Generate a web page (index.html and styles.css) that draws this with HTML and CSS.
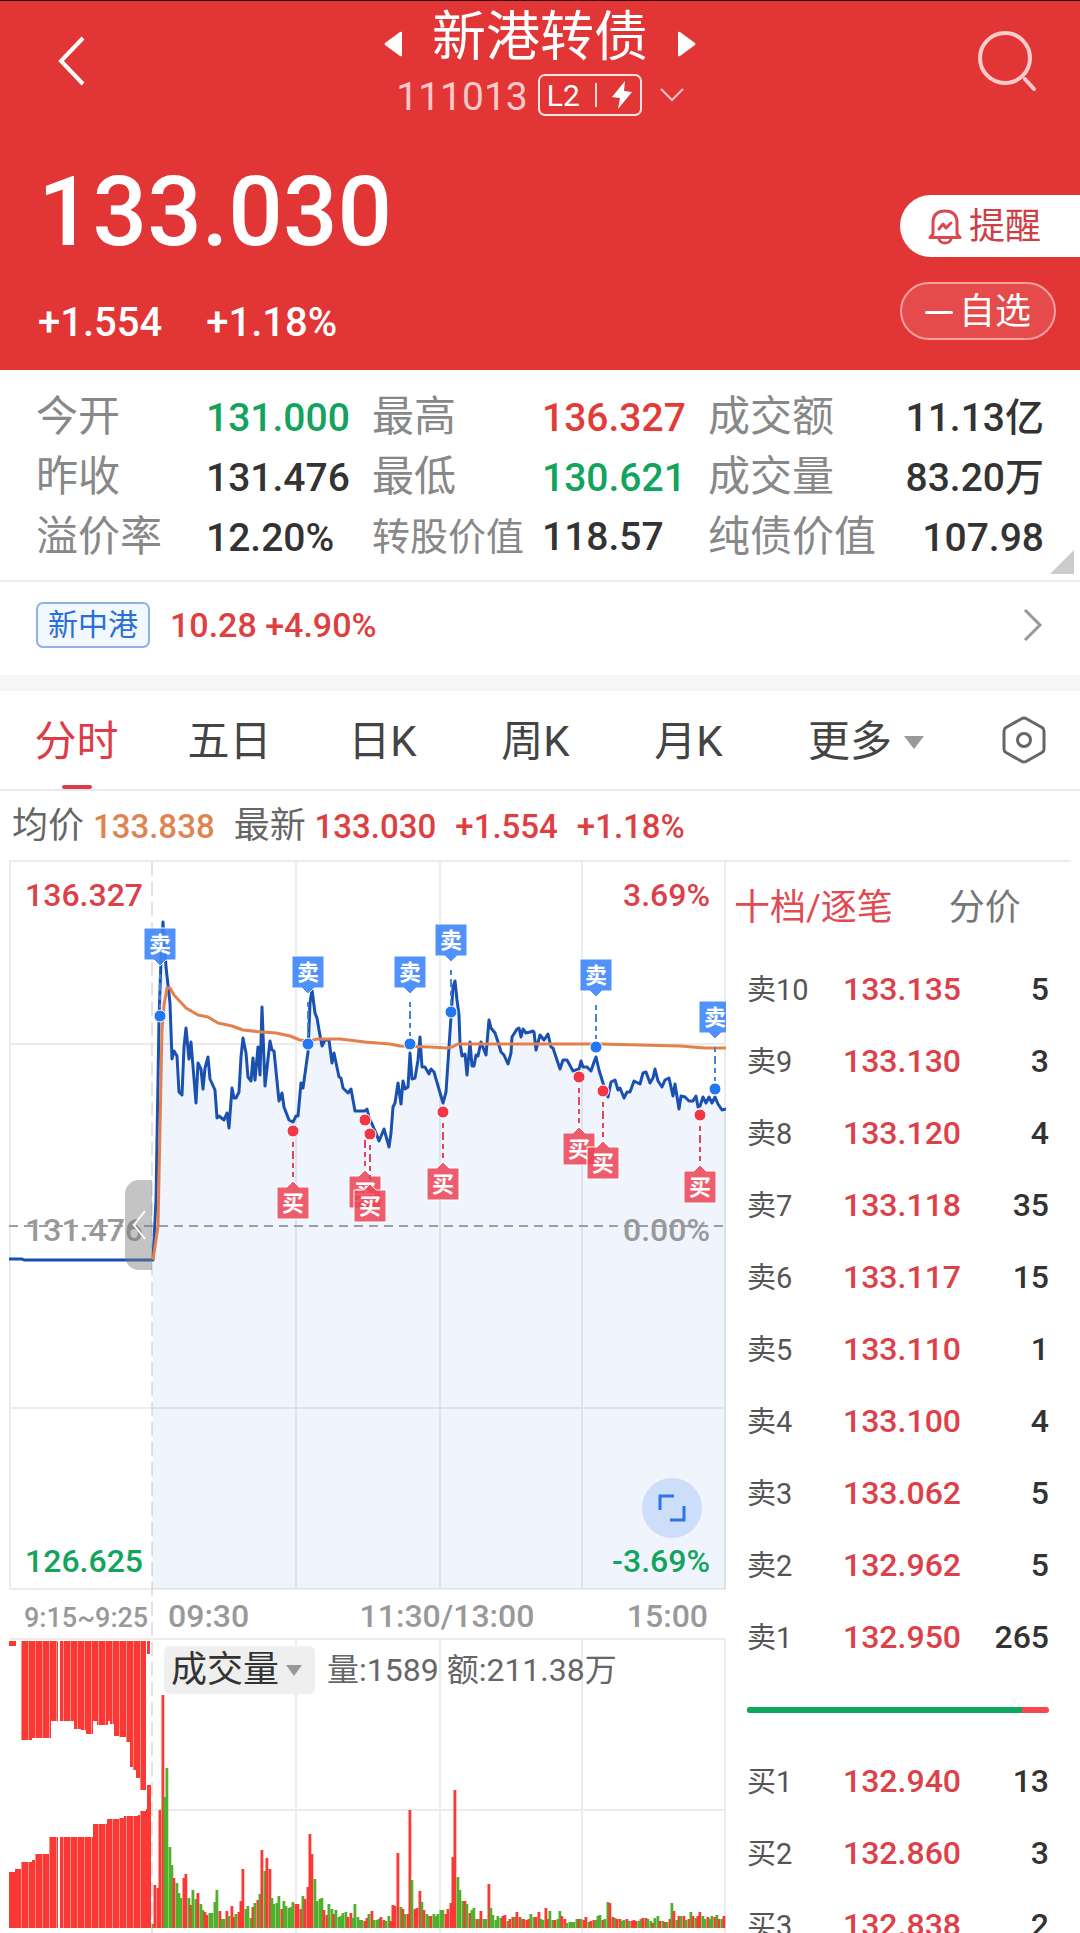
FILE: index.html
```html
<!DOCTYPE html>
<html lang="zh-CN">
<head>
  <meta charset="UTF-8">
  <meta name="viewport" content="width=device-width, initial-scale=1">
  <title>新港转债 111013</title>
  <link rel="stylesheet" href="styles.css">
</head>

<body>
  <header class="hero">
    <div class="topbar">
      <button class="icon-btn back" aria-label="返回">
        <svg width="32" height="52" viewBox="0 0 32 52"><path d="M27 3 L5 26 L27 49" fill="none" stroke="#fff" stroke-width="4"/></svg>
      </button>

      <div class="title">
        <div class="title-row">
          <button class="icon-btn arrow" aria-label="上一个">
            <svg width="18" height="26" viewBox="0 0 18 26"><path d="M18 2 Q18 0 16 1 L1 12 Q0 13 1 14 L16 25 Q18 26 18 24 Z" fill="#fff"/></svg>
          </button>
          <h1>新港转债</h1>
          <button class="icon-btn arrow" aria-label="下一个">
            <svg width="18" height="26" viewBox="0 0 18 26"><path d="M0 2 Q0 0 2 1 L17 12 Q18 13 17 14 L2 25 Q0 26 0 24 Z" fill="#fff"/></svg>
          </button>
        </div>
        <div class="code-row">
          <span class="code">111013</span>
          <span class="level">
            L2
            <i class="level-sep"></i>
            <svg width="20" height="28" viewBox="0 0 20 28"><path d="M13 0 L0 16 L8 17 L6 28 L20 11 L12 10 Z" fill="#fff"/></svg>
          </span>
          <svg class="down" width="24" height="14" viewBox="0 0 24 14"><path d="M1 1 L12 12 L23 1" fill="none" stroke="#ffc4c4" stroke-width="2"/></svg>
        </div>
      </div>

      <button class="icon-btn search" aria-label="搜索">
        <svg width="62" height="64" viewBox="0 0 62 64" fill="none" stroke="#ffcaca" stroke-linecap="round">
          <circle cx="29" cy="29" r="25" stroke-width="4"/>
          <path d="M49 50 L58 60" stroke-width="4"/>
        </svg>
      </button>
    </div>

    <div class="price-block">
      <div>
        <div class="price">133.030</div>
        <div class="change"><span>+1.554</span><span>+1.18%</span></div>
      </div>
      <div class="actions">
        <button class="remind">
          <svg width="34" height="36" viewBox="0 0 34 36" fill="none" stroke="#d94a50" stroke-width="3" stroke-linecap="round" stroke-linejoin="round">
            <path d="M5 25 V14 Q5 2 17 2 Q29 2 29 14 V25 L32 28.500 H2 Z"/>
            <path d="M11 30 Q12 34 17 34 Q22 34 23 30"/>
            <path d="M11 20 L15 15 L18 19 L23 14"/>
          </svg>
          提醒
        </button>
        <button class="watch"><i class="minus"></i>自选</button>
      </div>
    </div>
  </header>

  <section class="stats">
    <dl>
      <div><dt>今开</dt><dd class="green">131.000</dd></div>
      <div><dt>最高</dt><dd class="red">136.327</dd></div>
      <div><dt>成交额</dt><dd>11.13亿</dd></div>
      <div><dt>昨收</dt><dd>131.476</dd></div>
      <div><dt>最低</dt><dd class="green">130.621</dd></div>
      <div><dt>成交量</dt><dd>83.20万</dd></div>
      <div><dt>溢价率</dt><dd>12.20%</dd></div>
      <div><dt class="long">转股价值</dt><dd>118.57</dd></div>
      <div><dt>纯债价值</dt><dd>107.98</dd></div>
    </dl>
    <i class="corner"></i>
  </section>

  <a class="stock" href="#">
    <span class="tag">新中港</span>
    <span class="stock-price">10.28 +4.90%</span>
    <svg width="20" height="34" viewBox="0 0 20 34"><path d="M2 2 L17 17 L2 32" fill="none" stroke="#999" stroke-width="3"/></svg>
  </a>

  <nav class="tabs">
    <button class="active">分时</button>
    <button>五日</button>
    <button>日K</button>
    <button>周K</button>
    <button>月K</button>
    <button>更多<i class="caret"></i></button>
    <button class="settings" aria-label="设置">
      <svg width="44" height="48" viewBox="0 0 44 48" fill="none" stroke="#666" stroke-width="3" stroke-linejoin="round">
        <path d="M20 2.500 Q22 1.500 24 2.500 L40 11.500 Q42 13 42 15 V33 Q42 35 40 36.500 L24 45.500 Q22 46.500 20 45.500 L4 36.500 Q2 35 2 33 V15 Q2 13 4 11.500 Z"/>
        <circle cx="22" cy="24" r="6.500"/>
      </svg>
    </button>
  </nav>

  <div class="summary">
    <span>均价 <b class="orange">133.838</b></span>
    <span>最新 <b>133.030</b></span>
    <b>+1.554</b>
    <b>+1.18%</b>
  </div>

  <main class="quote">
    <div class="chart">
      <svg viewBox="9 862 717 1071" class="plot">
        <defs>
          <g id="sell">
            <path d="M0 -42 V-8" stroke="#3f84d8" stroke-width="2" stroke-dasharray="5 4 8 4"/>
            <circle r="6" fill="#2277f3" stroke="#fff" stroke-width="1"/>
            <path d="M-16 -88 H16 V-56 H6 L0 -50 L-6 -56 H-16 Z" fill="#3d85fb" fill-opacity=".9" stroke="#fff" stroke-width="1"/>
            <text y="-64" class="mark">卖</text>
          </g>
          <g id="buy">
            <path d="M0 11 V46" stroke="#e0455a" stroke-width="2" stroke-dasharray="5 4 8 4"/>
            <circle r="6" fill="#f23645" stroke="#fff" stroke-width="1"/>
            <path d="M-16 88 H16 V56 H6 L0 50 L-6 56 H-16 Z" fill="#ee4455" fill-opacity=".86" stroke="#fff" stroke-width="1"/>
            <text y="80" class="mark">买</text>
          </g>
        </defs>

        <!-- price grid -->
        <path class="grid" d="M10 862 V1589 M296 862 V1589 M440 862 V1589 M582 862 V1589 M725 862 V1589 M9 1044 H726 M9 1408 H726 M9 1589 H726"/>
        <path class="grid dashed" d="M152 862 V1933"/>
        <!-- volume grid -->
        <path class="grid" d="M296 1639 V1933 M440 1639 V1933 M582 1639 V1933 M725 1639 V1933 M9 1639 H726 M152 1810 H726"/>

        <path id="area" class="area"/>
        <path class="zero" d="M9 1226 H726"/>
        <text x="25" y="1241" class="lbl gray">131.476</text>
        <text x="710" y="1241" class="lbl gray end">0.00%</text>
        <path id="line" class="line"/>
        <path class="avg" d="M153 1260 L158 1226 L162 1030 L164 1005 L167 988 L170 988 L174 995 L186 1008 L198 1015 L208 1017 L218 1023 L232 1026 L243 1030 L262 1032 L276 1033 L290 1036 L300 1040 L308 1041 L318 1039 L340 1039 L365 1042 L390 1044 L400 1046 L430 1047 L447 1048 L452 1047 L458 1044 L600 1044 L640 1045 L680 1046 L705 1048 L726 1048"/>

        <use href="#sell" x="160" y="1016"/>
        <use href="#sell" x="308" y="1044"/>
        <use href="#sell" x="410" y="1044"/>
        <use href="#sell" x="451" y="1012"/>
        <use href="#sell" x="596" y="1047"/>
        <use href="#sell" x="715" y="1089"/>
        <use href="#buy" x="293" y="1131"/>
        <use href="#buy" x="365" y="1120"/>
        <use href="#buy" x="370" y="1134"/>
        <use href="#buy" x="443" y="1112"/>
        <use href="#buy" x="579" y="1077"/>
        <use href="#buy" x="603" y="1091"/>
        <use href="#buy" x="700" y="1115"/>

        <text x="25" y="906" class="lbl red">136.327</text>
        <text x="710" y="906" class="lbl red end">3.69%</text>
        <text x="25" y="1572" class="lbl green">126.625</text>
        <text x="710" y="1572" class="lbl green end">-3.69%</text>

        <text x="24" y="1627" class="time small">9:15~9:25</text>
        <text x="168" y="1627" class="time">09:30</text>
        <text x="447" y="1627" class="time mid">11:30/13:00</text>
        <text x="708" y="1627" class="time end">15:00</text>

        <g id="auction"></g>
        <g id="volume"></g>
      </svg>

      <button class="handle" aria-label="收起">
        <svg width="14" height="30" viewBox="0 0 14 30"><path d="M13 1 L2 15 L13 29" fill="none" stroke="#fff" stroke-width="2"/></svg>
      </button>
      <button class="expand" aria-label="全屏">
        <svg width="30" height="30" viewBox="0 0 30 30" fill="none" stroke="#2f73e8" stroke-width="3"><path d="M3 17 V3 H17"/><path d="M27 13 V27 H13"/></svg>
      </button>
      <div class="vol-head">
        <button class="vol-type">成交量<i class="caret"></i></button>
        <span>量:1589 额:211.38万</span>
      </div>
    </div>

    <aside class="book">
      <div class="book-tabs">
        <button class="active">十档/逐笔</button>
        <button>分价</button>
      </div>
      <table>
        <tr><th>卖10</th><td>133.135</td><td>5</td></tr>
        <tr><th>卖9</th><td>133.130</td><td>3</td></tr>
        <tr><th>卖8</th><td>133.120</td><td>4</td></tr>
        <tr><th>卖7</th><td>133.118</td><td>35</td></tr>
        <tr><th>卖6</th><td>133.117</td><td>15</td></tr>
        <tr><th>卖5</th><td>133.110</td><td>1</td></tr>
        <tr><th>卖4</th><td>133.100</td><td>4</td></tr>
        <tr><th>卖3</th><td>133.062</td><td>5</td></tr>
        <tr><th>卖2</th><td>132.962</td><td>5</td></tr>
        <tr><th>卖1</th><td>132.950</td><td>265</td></tr>
      </table>
      <div class="ratio"><div class="ratio-bar"><i style="width: 91%"></i></div></div>
      <table>
        <tr><th>买1</th><td>132.940</td><td>13</td></tr>
        <tr><th>买2</th><td>132.860</td><td>3</td></tr>
        <tr><th>买3</th><td>132.838</td><td>2</td></tr>
      </table>
    </aside>
  </main>

  <script src="chart.js"></script>
</body>

</html>
```

FILE: styles.css
```css
* {
  box-sizing: border-box;
}

body {
  margin: 0;
  height: 100vh;
  overflow: hidden;
  background: #fff;
  color: #333;
  font-family: Roboto, "Noto Sans CJK SC", sans-serif;
}

button {
  margin: 0;
  padding: 0;
  border: 0;
  background: none;
  color: inherit;
  font: inherit;
  cursor: pointer;
}

svg {
  display: block;
}

.red { color: #e23c39; fill: #dc4048; }
.green { color: #12a35d; fill: #12a35d; }

/* header */
.hero {
  background: #e23536;
  border-top: 1px solid #300;
  color: #fff;
  padding-bottom: 22px;
}

.topbar {
  display: grid;
  grid-template-columns: 1fr auto 1fr;
  align-items: start;
  padding: 2px 42px 0;
}

.back {
  justify-self: start;
  margin: 32px 0 0 14px;
}

.search {
  justify-self: end;
  margin-top: 26px;
}

.title-row {
  display: flex;
  justify-content: center;
  align-items: flex-end;
  gap: 30px;
}

h1 {
  margin: 0;
  padding-top: 6px;
  font-size: 54px;
  line-height: 58px;
  font-weight: 400;
}

.arrow {
  padding-bottom: 10px;
}

.code-row {
  display: flex;
  justify-content: center;
  align-items: center;
  gap: 10px;
  margin-top: 7px;
}

.code {
  padding-top: 4px;
  font-size: 39px;
  line-height: 38px;
  color: #ffc9c9;
}

.level {
  display: flex;
  align-items: center;
  justify-content: space-between;
  width: 104px;
  height: 42px;
  padding: 0 8px 0 7px;
  border: 2px solid #ffe3e3;
  border-radius: 7px;
  font-size: 30px;
}

.level-sep {
  width: 2px;
  height: 24px;
  background: #ffd5d5;
}

.down {
  margin-left: 8px;
}

.price-block {
  display: flex;
  justify-content: space-between;
  padding: 40px 0 0 38px;
}

.price {
  font-size: 96px;
  line-height: 112px;
  font-weight: 500;
}

.change {
  display: flex;
  gap: 44px;
  margin-top: 30px;
  font-size: 40px;
  line-height: 50px;
  font-weight: 500;
}

.actions {
  display: flex;
  flex-direction: column;
  gap: 25px;
  width: 180px;
  padding-top: 39px;
}

.remind {
  display: flex;
  align-items: center;
  gap: 7px;
  height: 62px;
  padding: 2px 0 0 28px;
  border-radius: 31px 0 0 31px;
  background: #fff;
  color: #cf4046;
  font-size: 36px;
  line-height: 36px;
}

.watch {
  display: flex;
  align-items: center;
  justify-content: center;
  gap: 6px;
  width: 156px;
  height: 58px;
  padding-top: 2px;
  border: 2px solid #f3a0a0;
  border-radius: 29px;
  background: #e64b4c;
  font-size: 36px;
  line-height: 36px;
}

.minus {
  width: 28px;
  height: 3px;
  border-radius: 2px;
  background: #fff;
}

/* stats */
.stats {
  position: relative;
  padding: 17px 36px 13px;
  border-bottom: 2px solid #ededed;
}

.stats dl {
  display: grid;
  grid-template-columns: repeat(3, 1fr);
  margin: 0;
}

.stats dl div {
  display: flex;
  align-items: baseline;
  height: 60px;
  line-height: 60px;
  white-space: nowrap;
}

.stats dt {
  width: 170px;
  color: #888;
  font-size: 42px;
}

.stats dt.long {
  font-size: 38px;
}

.stats dd {
  margin: 0;
  font-size: 39px;
  font-weight: 500;
}

.stats dl div:nth-child(3n) {
  justify-content: space-between;
}

.corner {
  position: absolute;
  right: 6px;
  bottom: 6px;
  border-left: 24px solid transparent;
  border-bottom: 24px solid #ccc;
}

.stock {
  display: flex;
  align-items: center;
  gap: 20px;
  height: 109px;
  padding: 0 37px 8px 36px;
  border-bottom: 16px solid #f7f7f7;
  color: #dc4040;
  text-decoration: none;
  font-size: 34px;
  font-weight: 500;
}

.tag {
  padding: 0 10px;
  border: 2px solid #8fb3e6;
  border-radius: 7px;
  background: #f2f8ff;
  color: #2a6fd6;
  font-size: 30px;
  line-height: 42px;
  font-weight: 400;
}

.stock svg {
  margin-left: auto;
}

/* tabs */
.tabs {
  display: grid;
  grid-template-columns: repeat(5, 153fr) 202fr 113fr;
  height: 100px;
  border-bottom: 2px solid #e9e9e9;
}

.tabs button {
  position: relative;
  display: flex;
  align-items: center;
  justify-content: center;
  padding-top: 4px;
  color: #444;
  font-size: 42px;
  line-height: 60px;
}

.tabs .settings {
  padding-top: 0;
}

.tabs .active {
  color: #dc3c46;
}

.tabs .active::after {
  content: "";
  position: absolute;
  bottom: 0;
  width: 30px;
  height: 4px;
  border-radius: 2px;
  background: #dc3c46;
}

.tabs .caret {
  margin-left: 12px;
  border: 10px solid transparent;
  border-top: 13px solid #999;
  border-bottom: 0;
}

.summary {
  display: flex;
  align-items: baseline;
  gap: 19px;
  height: 69px;
  padding-left: 12px;
  color: #666;
  font-size: 36px;
  line-height: 70px;
}

.summary b {
  font-size: 33px;
  font-weight: 500;
  color: #dc4040;
}

.summary .orange {
  color: #dd8450;
}

/* chart and order book */
.quote {
  display: grid;
  grid-template-columns: 717fr 345fr;
  margin: 0 9px;
  border-top: 2px solid #ebebeb;
}

.chart {
  position: relative;
}

.plot {
  width: 100%;
}

.grid {
  fill: none;
  stroke: #ececec;
  stroke-width: 2;
}

.grid.dashed {
  stroke: #e2e2e2;
  stroke-dasharray: 14 6;
}

.area {
  fill: #2a66dd;
  fill-opacity: .07;
}

.zero {
  stroke: #999ea8;
  stroke-width: 2;
  stroke-dasharray: 9 6;
}

.line, .avg {
  fill: none;
  stroke-width: 3;
  stroke-linejoin: round;
}

.line { stroke: #1a50b0; }
.avg { stroke: #e4804e; }

.mark {
  fill: #fff;
  font-family: "Noto Sans CJK SC", sans-serif;
  font-size: 22px;
  font-weight: 700;
  text-anchor: middle;
}

.lbl {
  font-size: 32px;
  font-weight: 500;
}

.gray, .time { fill: #999; }
.time { font-size: 32px; font-weight: 500; }
.time.small { font-size: 27px; }
.end { text-anchor: end; }
.mid { text-anchor: middle; }

.up { fill: #fb3934; }
.dn { fill: #50b02c; }
.split { stroke: #ff8f8b; stroke-width: 1; }

.handle {
  position: absolute;
  left: 116px;
  top: 318px;
  display: flex;
  align-items: center;
  justify-content: center;
  width: 27px;
  height: 90px;
  border-radius: 14px 0 0 14px;
  background: rgba(125, 125, 125, .45);
}

.expand {
  position: absolute;
  right: 24px;
  top: 616px;
  display: flex;
  align-items: center;
  justify-content: center;
  width: 60px;
  height: 60px;
  border-radius: 50%;
  background: #cddefa;
}

.vol-head {
  position: absolute;
  left: 155px;
  top: 784px;
  display: flex;
  align-items: center;
  gap: 12px;
  color: #666;
  font-size: 32px;
  line-height: 48px;
}

.vol-type {
  display: flex;
  align-items: center;
  height: 48px;
  padding: 0 13px 0 7px;
  border-radius: 6px;
  background: #efefef;
  color: #333;
  font-size: 36px;
}

.vol-type .caret {
  margin-left: 7px;
  border: 8px solid transparent;
  border-top: 11px solid #999;
  border-bottom: 0;
}

.book {
  padding: 0 22px 0 21px;
}

.book-tabs {
  display: flex;
  gap: 56px;
  height: 92px;
  margin-left: -13px;
  color: #777;
  font-size: 36px;
  line-height: 92px;
  white-space: nowrap;
}

.book-tabs .active {
  color: #e04a50;
}

.book table {
  width: 100%;
  border-collapse: collapse;
}

.book tr {
  height: 72px;
}

.book th, .book td {
  padding: 0;
  line-height: 70px;
  vertical-align: baseline;
}

.book th {
  width: 76px;
  text-align: left;
  font-size: 29px;
  font-weight: 400;
  color: #555;
}

.book td {
  text-align: right;
  font-size: 32px;
  font-weight: 500;
}

.book td:nth-child(2) {
  width: 138px;
  color: #dc4048;
}

.ratio {
  display: flex;
  align-items: center;
  height: 72px;
}

.ratio-bar {
  flex: 1;
  height: 6px;
  border-radius: 3px;
  overflow: hidden;
  background: #f8484e;
}

.ratio-bar i {
  display: block;
  height: 100%;
  background: #0aa860;
}
```

FILE: chart.js
```js
const NS = "http://www.w3.org/2000/svg";
const BASE = 1928;

// minute prices, x,y in plot units
const prices = `153,1260 156,1200 159,1020 161,960 163,922 166,967 170,1003 172,1059 174,1051 177,1056 179,1092 182,1095
184,1047 186,1028 189,1059 191,1042 196,1103 198,1063 201,1069 203,1089 205,1068 208,1057 210,1079 215,1090 217,1118
219,1116 224,1120 227,1113 229,1128 232,1088 234,1098 236,1098 239,1092 241,1057 243,1038 246,1053 248,1077 251,1081
253,1058 255,1080 258,1047 260,1075 262,1007 265,1086 270,1041 272,1050 274,1051 279,1101 282,1093 284,1107 289,1120
293,1122 296,1116 298,1116 301,1083 303,1088 308,1052 310,1003 312,990 315,1013 317,1018 319,1030 322,1046 325,1040
329,1040 332,1063 334,1053 339,1077 341,1078 343,1088 348,1093 351,1089 355,1111 365,1111 367,1109 369,1117 372,1124
376,1133 379,1141 384,1129 389,1147 391,1133 393,1107 395,1103 398,1083 401,1104 403,1081 405,1089 408,1087 410,1053
412,1079 415,1078 418,1060 420,1037 422,1067 425,1067 429,1074 431,1069 434,1072 443,1103 446,1092 449,1047 451,1017
453,987 455,981 457,1000 459,1015 460,1043 462,1056 465,1054 467,1075 470,1042 472,1066 474,1066 476,1055 478,1056
481,1042 486,1055 489,1020 491,1028 495,1033 498,1042 501,1052 504,1055 508,1064 511,1053 512,1037 517,1029 519,1028
521,1037 523,1029 526,1033 530,1032 533,1031 534,1032 536,1050 540,1035 544,1040 548,1034 551,1047 553,1048 560,1069
563,1060 567,1060 573,1071 579,1069 581,1061 583,1067 587,1067 591,1071 594,1062 596,1057 599,1070 603,1083 608,1097
611,1082 615,1080 618,1090 620,1088 624,1098 627,1092 630,1092 634,1081 640,1084 643,1073 646,1072 650,1083 653,1078
655,1069 658,1081 662,1087 665,1080 669,1078 671,1087 673,1096 675,1084 679,1109 681,1096 685,1097 689,1101 693,1101
696,1096 698,1107 700,1106 703,1097 706,1103 709,1097 712,1103 715,1097 718,1104 722,1110 726,1109`.split(/\s+/).join(" L");

document.getElementById("line").setAttribute("d", "M9,1259 L22,1259 L24,1260 L" + prices);
document.getElementById("area").setAttribute("d", "M" + prices + " V1589 H152 Z");

function rect(parent, x, y, w, h, cls) {
  const r = document.createElementNS(NS, "rect");
  r.setAttribute("x", x);
  r.setAttribute("y", y);
  r.setAttribute("width", w);
  r.setAttribute("height", h);
  r.setAttribute("class", cls);
  parent.appendChild(r);
}

// call auction: [from, to, edge]
const auction = document.getElementById("auction");
const unmatched = [[9, 16, 1646], [22, 32, 1740], [32, 51, 1738], [51, 58, 1721], [60, 74, 1721], [74, 81, 1729],
  [81, 86, 1730], [86, 93, 1734], [93, 97, 1721], [97, 108, 1725], [108, 110, 1721], [110, 114, 1724],
  [114, 120, 1736], [120, 126, 1737], [126, 130, 1742], [130, 133, 1767], [133, 136, 1770], [136, 140, 1778],
  [140, 146, 1790], [147, 150, 1654]];
const matched = [[9, 15, 1872], [15, 22, 1869], [22, 32, 1862], [32, 36, 1860], [36, 50, 1854], [50, 58, 1837],
  [60, 93, 1837], [93, 107, 1824], [107, 119, 1819], [119, 124, 1818], [124, 138, 1816], [138, 140, 1815],
  [140, 146, 1811], [146, 147, 1809], [147, 151, 1785]];

unmatched.forEach(([a, b, y]) => rect(auction, a, 1641, b - a, y - 1641, "up"));
matched.forEach(([a, b, y]) => rect(auction, a, y, b - a, BASE - y, "up"));

let d = "";
for (let x = 22; x < 146; x += 7) {
  const top = unmatched.find(([a, b]) => x >= a && x < b);
  const low = matched.find(([a, b]) => x >= a && x < b);
  if (top) d += `M${x - 0.5} 1641 V${top[2]} `;
  if (low) d += `M${x - 0.5} ${low[2]} V${BASE} `;
}
const split = document.createElementNS(NS, "path");
split.setAttribute("d", d);
split.setAttribute("class", "split");
auction.appendChild(split);

// minute volume: x, r(ise) or g (fall), height
const volume = document.getElementById("volume");
`153g4 155r43 158r40 160r118 163r233 165g131 167g160 170g81 172g63 174r50 177g45 179g35 181g30 184r50 186r54 189g30 191r23
193g38 196g29 198r35 201g24 203g18 205r16 207r13 210g15 212g15 215g26 217g38 220r17 222g9 224g9 227r17 229g12 232r22
234r11 236g14 239r16 241r27 243r59 246g19 248g22 251g10 253r21 255g25 258r28 260g34 262r78 265g57 267r70 270r59 272g30
274g24 277g25 279g32 282r19 284g27 286g22 289g20 291g21 293g26 296r24 298r24 301r19 303g32 305r29 308r41 310r94 312r74
315g49 317g27 320g29 322g30 324r18 327r13 329g24 332g19 334r14 336g18 339g11 341g12 343g15 346g16 348r11 351r15 353g10
355g24 358g11 360g8 362g8 365r7 367r10 369g14 372r17 374g8 377g8 379g9 381r11 384r8 386g7 389g12 391r7 393r23 395r22
398r75 401g21 403r19 405g14 408r14 410r118 412g48 415r19 417r20 420r37 422g26 424r18 427g14 429g12 431r12 434g14 436g12
438g14 441g18 443g18 446r14 448r19 451r25 453r71 455r138 458g51 460g38 463g27 465r27 467g24 470r15 472g18 474g20 477r9
479g9 481r17 484g9 486g9 489r44 491g20 493g13 496g8 498g12 501g10 503r12 505r13 508g7 510r9 513r11 515g11 517r16 520r11
522g9 524r9 527r8 529r9 531g14 534g11 536r11 539r16 541g9 543g8 546r20 548r9 550g17 553g8 555r8 558g9 560g17 562r12
565r9 567g5 570g6 572g6 574g6 577g9 579r9 581g9 584r8 586r11 589g6 591r7 594r8 596g8 598g12 600g13 603r8 605g9 608g26
610r25 613r11 615g10 617r9 620r9 622g7 624g8 627r9 629g7 632r7 634r8 636r7 639g7 641g9 643r10 646r10 648g9 651g7 653r5
655g10 658g12 660r7 663g7 665r6 667g6 670r9 672g25 674r17 677g8 679r12 681g12 684r12 686g8 689r9 691g16 693r12 696g10
698r12 700r16 703g12 705g9 708r11 710g9 712g12 715r11 717g13 719r9 722g9 724r12`.split(/\s+/).forEach((s) => {
  const [, x, dir, h] = s.match(/(\d+)([rg])(\d+)/);
  rect(volume, x - 1.5, BASE - h, 2.8, h, dir === "r" ? "up" : "dn");
});
```
